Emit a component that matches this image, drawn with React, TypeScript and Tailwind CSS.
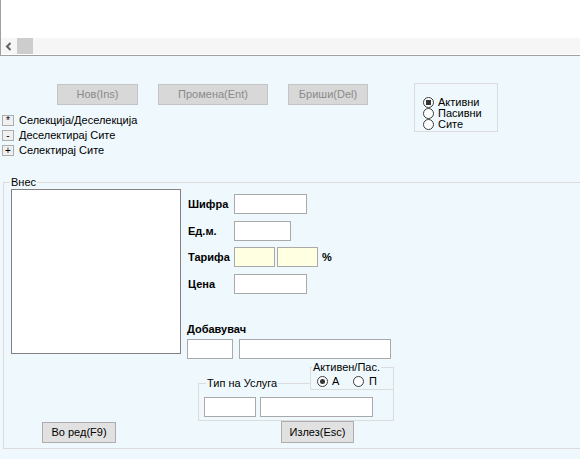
import React from "react";

function Radio({ checked, square }: { checked?: boolean; square?: boolean }) {
  return (
    <svg width="11" height="11" viewBox="0 0 11 11" className="shrink-0 block">
      <circle cx="5.5" cy="5.5" r="5" fill="white" stroke="#3c3c3c" strokeWidth="1" />
      {checked &&
        (square ? (
          <rect x="3" y="3" width="5" height="5" fill="#333" />
        ) : (
          <circle cx="5.5" cy="5.5" r="2.5" fill="#333" />
        ))}
    </svg>
  );
}

function DisabledBtn({ label, w }: { label: string; w: string }) {
  return (
    <div
      className={`${w} h-[21px] bg-[#d8d8d8] border border-[#c4c4c4] flex items-center justify-center text-[11px] text-[#8a8a8a]`}
    >
      {label}
    </div>
  );
}

function SelRow({ sym, label }: { sym: string; label: string }) {
  return (
    <div className="h-[15px] flex items-center">
      <div className="ml-[2px] w-[12px] h-[11px] bg-[#f0f0f0] border border-[#adadad] flex items-center justify-center text-[10px] leading-none text-black">
        {sym}
      </div>
      <span className="ml-[5px] text-[11px] text-black">{label}</span>
    </div>
  );
}

function Input({ w, yellow }: { w: string; yellow?: boolean }) {
  return (
    <div
      className={`${w} h-[20px] border border-[#a9a9a9] ${yellow ? "bg-[#ffffe1]" : "bg-white"}`}
    />
  );
}

function FieldRow({ label, mt, children }: { label: string; mt: string; children: React.ReactNode }) {
  return (
    <div className={`${mt} h-[20px] flex items-center`}>
      <span className="w-[47px] pl-[1px] text-[11px] font-bold text-black">{label}</span>
      {children}
    </div>
  );
}

export default function App() {
  return (
    <div className="w-[580px] h-[459px] overflow-hidden flex flex-col bg-[#eff8fc] font-['Liberation_Sans',Arial,sans-serif]">
      {/* top grid panel */}
      <div className="h-[56px] shrink-0 bg-white border-l border-b border-[#a0a0a0] flex flex-col justify-end">
        <div className="h-[16px] mb-[1px] bg-[#f6f6f6] flex">
          <div className="w-[16px] h-full flex items-center justify-center">
            <svg width="8" height="9" viewBox="0 0 8 9">
              <path d="M5.5 1 L2 4.5 L5.5 8" fill="none" stroke="#606060" strokeWidth="2" />
            </svg>
          </div>
          <div className="w-[16px] h-full bg-[#cdcdcd]" />
        </div>
      </div>

      {/* top section */}
      <div className="h-[126px] shrink-0 pt-[27px] flex items-start">
        <div className="w-[414px] flex flex-col">
          <div className="mt-[1px] pl-[57px] flex gap-[20px]">
            <DisabledBtn label="Нов(Ins)" w="w-[81px]" />
            <DisabledBtn label="Промена(Ent)" w="w-[110px]" />
            <DisabledBtn label="Бриши(Del)" w="w-[80px]" />
          </div>
          <div className="mt-[8px] flex flex-col">
            <SelRow sym="*" label="Селекција/Деселекција" />
            <SelRow sym="-" label="Деселектирај Сите" />
            <SelRow sym="+" label="Селектирај Сите" />
          </div>
        </div>
        <div className="w-[84px] h-[49px] border border-[#dcdcdc] pt-[13px] pl-[8px] flex flex-col">
          <div className="h-[11px] flex items-center gap-[4px] text-[11px] leading-[11px] text-black">
            <Radio checked square />
            <span>Активни</span>
          </div>
          <div className="h-[11px] flex items-center gap-[4px] text-[11px] leading-[11px] text-black">
            <Radio />
            <span>Пасивни</span>
          </div>
          <div className="h-[11px] flex items-center gap-[4px] text-[11px] leading-[11px] text-black">
            <Radio />
            <span>Сите</span>
          </div>
        </div>
      </div>

      {/* Внес group */}
      <div className="relative ml-[3px] w-[600px] h-[267px] shrink-0 border border-[#dcdcdc]">
        <span className="absolute -top-[8px] left-[6px] px-[1px] bg-[#eff8fc] text-[11px] leading-[14px] text-black">
          Внес
        </span>
        <div className="pt-[6px] pl-[7px] flex">
          {/* left column */}
          <div className="flex flex-col">
            <div className="w-[170px] h-[165px] border border-[#828282] bg-white" />
            <div className="ml-[31px] mt-[68px] w-[74px] h-[21px] bg-[#e1e1e1] border border-[#adadad] flex items-center justify-center text-[11px] text-black">
              Во ред(F9)
            </div>
          </div>
          {/* right column */}
          <div className="ml-[6px] flex flex-col">
            <FieldRow label="Шифра" mt="mt-[5px]">
              <Input w="w-[73px]" />
            </FieldRow>
            <FieldRow label="Ед.м." mt="mt-[7px]">
              <Input w="w-[57px]" />
            </FieldRow>
            <FieldRow label="Тарифа" mt="mt-[6px]">
              <Input w="w-[41px]" yellow />
              <div className="ml-[2px]">
                <Input w="w-[41px]" yellow />
              </div>
              <span className="ml-[4px] text-[11px] font-bold text-black">%</span>
            </FieldRow>
            <FieldRow label="Цена" mt="mt-[7px]">
              <Input w="w-[73px]" />
            </FieldRow>
            <div className="mt-[28px] h-[14px] flex items-center text-[11px] font-bold text-black">
              Добавувач
            </div>
            <div className="mt-[3px] flex gap-[6px]">
              <Input w="w-[46px]" />
              <Input w="w-[152px]" />
            </div>
            {/* Активен/Пас. */}
            <div className="relative z-10 mt-[8px] ml-[123px] w-[84px] h-[23px] border border-[#dcdcdc] bg-[#eff8fc] pt-[8px] pl-[6px] flex">
              <span className="absolute -top-[8px] left-[1px] px-[1px] bg-[#eff8fc] text-[11px] leading-[14px] text-black whitespace-nowrap">
                Активен/Пас.
              </span>
              <div className="w-[36px] h-[11px] flex items-center gap-[4px] text-[11px] leading-[11px] text-black">
                <Radio checked />
                <span>А</span>
              </div>
              <div className="h-[11px] flex items-center gap-[5px] text-[11px] leading-[11px] text-black">
                <Radio />
                <span>П</span>
              </div>
            </div>
            {/* Тип на Услуга */}
            <div className="relative -mt-[7px] ml-[11px] w-[196px] h-[38px] border border-[#dcdcdc] pt-[13px] pl-[5px] flex gap-[4px]">
              <span className="absolute -top-[8px] left-[7px] px-[1px] bg-[#eff8fc] text-[11px] leading-[14px] text-black whitespace-nowrap">
                Тип на Услуга
              </span>
              <Input w="w-[52px]" />
              <Input w="w-[113px]" />
            </div>
            <div className="ml-[94px] w-[73px] h-[22px] bg-[#e1e1e1] border border-[#adadad] flex items-center justify-center text-[11px] text-black">
              Излез(Esc)
            </div>
          </div>
        </div>
      </div>
    </div>
  );
}
